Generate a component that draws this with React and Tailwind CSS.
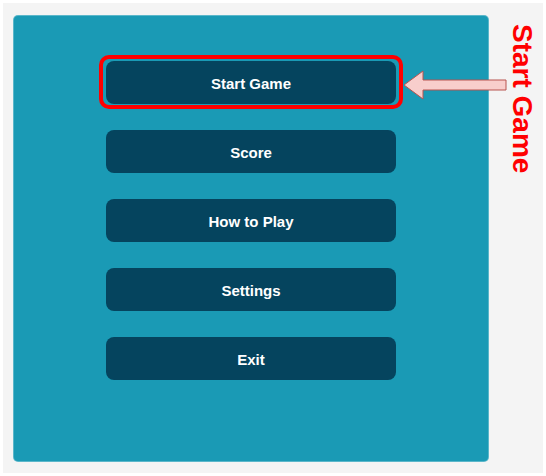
const MENU_ITEMS = ["Start Game", "Score", "How to Play", "Settings", "Exit"];

function Arrow() {
  return (
    <svg
      width="106"
      height="32"
      viewBox="0 0 106 32"
      className="absolute left-[399px] top-[66px]"
    >
      <path
        d="M2 16 L21 2 L21 11 L104 11 L104 21 L21 21 L21 30 Z"
        fill="#f8cecc"
        stroke="#b85450"
        strokeWidth="1"
      />
    </svg>
  );
}

export default function App() {
  return (
    <div className="w-[546px] h-[476px] bg-white p-[3px] font-['Liberation_Sans',Arial,sans-serif]">
      <div className="relative w-[540px] h-[470px] bg-[#f4f4f4] pt-[12px] pl-[10px]">
        {/* Teal panel */}
        <div className="w-[476px] h-[447px] rounded-[5px] bg-[#1a9ab5] border border-[#bfe3ea]/40 pt-[45px] flex flex-col items-center gap-[26px]">
          {MENU_ITEMS.map((label, i) => (
            <div key={label} className="relative">
              <button className="w-[290px] h-[43px] pt-[3px] rounded-[8px] bg-[#05445e] text-white text-[15px] font-bold">
                {label}
              </button>
              {i === 0 && (
                <div className="absolute -left-[7px] -right-[7px] -top-[6px] -bottom-[5px] rounded-[10px] border-[4px] border-[#ff0000] pointer-events-none" />
              )}
            </div>
          ))}
        </div>

        {/* Annotation */}
        <Arrow />
        <div className="absolute left-[505px] top-[21px] text-[28px] font-bold text-[#ff0000] leading-none [writing-mode:vertical-rl]">
          Start Game
        </div>
      </div>
    </div>
  );
}
